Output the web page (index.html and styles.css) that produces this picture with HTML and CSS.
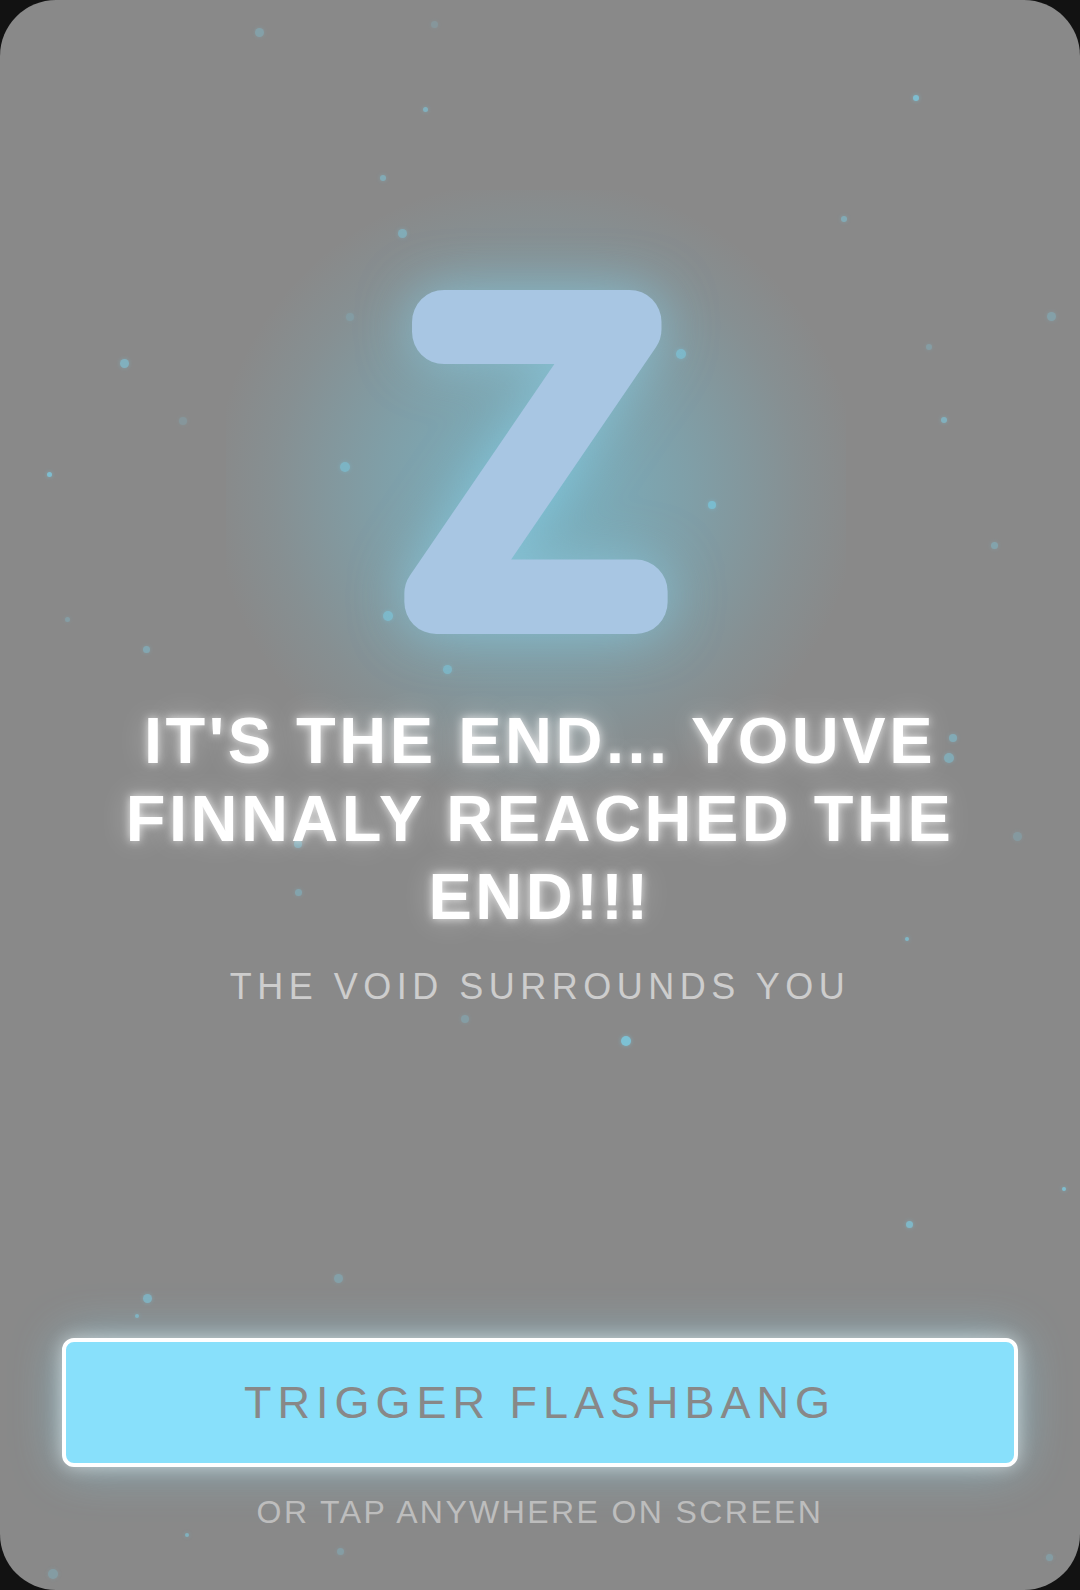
FILE: index.html
```html
<!DOCTYPE html>
<html lang="en">
<head>
  <meta charset="UTF-8" />
  <title>The End</title>
  <link rel="stylesheet" href="styles.css">
</head>
<body>
  <div class="tela" id="tela">
    <div class="particulas" id="particulas"></div>

    <div class="marca">
      <svg class="marca-z" width="420" height="480" viewBox="0 0 420 480">
        <text x="210" y="382" text-anchor="middle">Z</text>
      </svg>
    </div>

    <h1 class="titulo">IT'S THE END... YOUVE FINNALY REACHED THE END!!!</h1>
    <div class="subtitulo">THE VOID SURROUNDS YOU</div>

    <div class="rodape">
      <button class="btn-flash" id="btnFlash">TRIGGER FLASHBANG</button>
      <div class="dica">OR TAP ANYWHERE ON SCREEN</div>
    </div>
  </div>

  <script>
    // pontos de luz flutuando: [x, y, tamanho, opacidade]
    const pontos = [
      [259,32,9,.35],[434,24,7,.2],[425,109,5,.6],[916,98,6,.8],[383,178,6,.5],
      [844,219,6,.5],[402,233,9,.5],[350,317,8,.2],[1051,316,9,.35],[124,363,9,.6],
      [681,354,10,.6],[929,347,6,.3],[944,420,6,.6],[183,421,8,.2],[345,467,10,.55],
      [49,474,5,.8],[712,505,8,.7],[994,545,7,.4],[388,616,10,.6],[67,619,5,.3],
      [146,649,7,.45],[447,669,9,.55],[953,738,8,.5],[949,758,10,.5],[298,844,8,.5],
      [1017,836,9,.25],[298,892,7,.4],[907,939,4,.7],[465,1019,8,.3],[626,1041,10,.85],
      [1064,1189,4,.8],[909,1224,7,.7],[338,1278,9,.35],[147,1298,9,.6],[137,1316,4,.6],
      [187,1535,4,.6],[340,1551,7,.3],[53,1574,10,.3],[1049,1557,7,.3]
    ];
    const caixa = document.getElementById("particulas");
    pontos.forEach(([x, y, t, o]) => {
      const p = document.createElement("span");
      p.className = "ponto";
      p.style.left = (x - t / 2) + "px";
      p.style.top = (y - t / 2) + "px";
      p.style.width = t + "px";
      p.style.height = t + "px";
      p.style.opacity = o;
      caixa.appendChild(p);
    });

    function flashbang() {
      document.body.classList.add("flash");
      setTimeout(() => document.body.classList.remove("flash"), 600);
    }
    document.getElementById("tela").onclick = flashbang;
  </script>
</body>
</html>
```

FILE: styles.css
```css
html, body { margin: 0; padding: 0; }
body {
  background: #121212;
  font-family: 'Liberation Sans', Arial, sans-serif;
  overflow: hidden;
}
.tela {
  position: relative;
  height: 100vh;
  background: #898989;
  border-radius: 56px;
  overflow: hidden;
  display: flex;
  flex-direction: column;
  align-items: center;
  box-sizing: border-box;
  padding: 220px 0 59px;
  text-align: center;
  cursor: pointer;
}
.particulas { position: absolute; inset: 0; pointer-events: none; }
.ponto {
  position: absolute;
  border-radius: 50%;
  background: #7ccbe2;
  box-shadow: 0 0 4px rgba(124, 203, 226, 0.6);
}

/* letra Z com brilho */
.marca {
  position: relative;
  width: 420px;
  height: 480px;
  margin-left: -8px;
}
.marca::before {
  content: "";
  position: absolute;
  left: -100px; right: -100px; top: -30px; bottom: -90px;
  background: radial-gradient(ellipse at center, rgba(110, 200, 225, 0.65) 0%, rgba(110, 200, 225, 0.35) 35%, rgba(110, 200, 225, 0.1) 60%, transparent 74%);
}
.marca-z {
  position: relative;
  display: block;
  filter: drop-shadow(0 0 26px rgba(140, 215, 240, 0.55));
}
.marca-z text {
  font-family: Roboto, sans-serif;
  font-weight: 100;
  font-size: 394px;
  fill: #a8c6e3;
  stroke: #a8c6e3;
  stroke-width: 64px;
  stroke-linejoin: round;
  stroke-linecap: round;
}

.titulo {
  position: relative;
  margin: 2px 0 0;
  width: 900px;
  font-size: 65px;
  line-height: 1.2;
  font-weight: bold;
  letter-spacing: 3.5px;
  color: #fff;
  text-shadow: 0 0 10px rgba(255, 255, 255, 0.8), 0 0 30px rgba(255, 255, 255, 0.4);
}
.subtitulo {
  position: relative;
  margin-top: 30px;
  font-size: 36px;
  letter-spacing: 5.5px;
  color: #cdcdcd;
}

.rodape {
  margin-top: auto;
  position: relative;
  display: flex;
  flex-direction: column;
  align-items: center;
}
.btn-flash {
  width: 956px;
  height: 129px;
  border: 4px solid #fff;
  border-radius: 12px;
  background: #88e0fb;
  color: #888;
  font-family: 'Liberation Sans', Arial, sans-serif;
  font-size: 45px;
  letter-spacing: 6px;
  cursor: pointer;
  box-shadow: 0 0 18px rgba(255, 255, 255, 0.55), 0 0 50px rgba(137, 224, 251, 0.45);
}
.dica {
  margin-top: 27px;
  font-size: 32px;
  letter-spacing: 2.4px;
  color: #bdbdbd;
}

body.flash .tela { background: #fff; }
```
